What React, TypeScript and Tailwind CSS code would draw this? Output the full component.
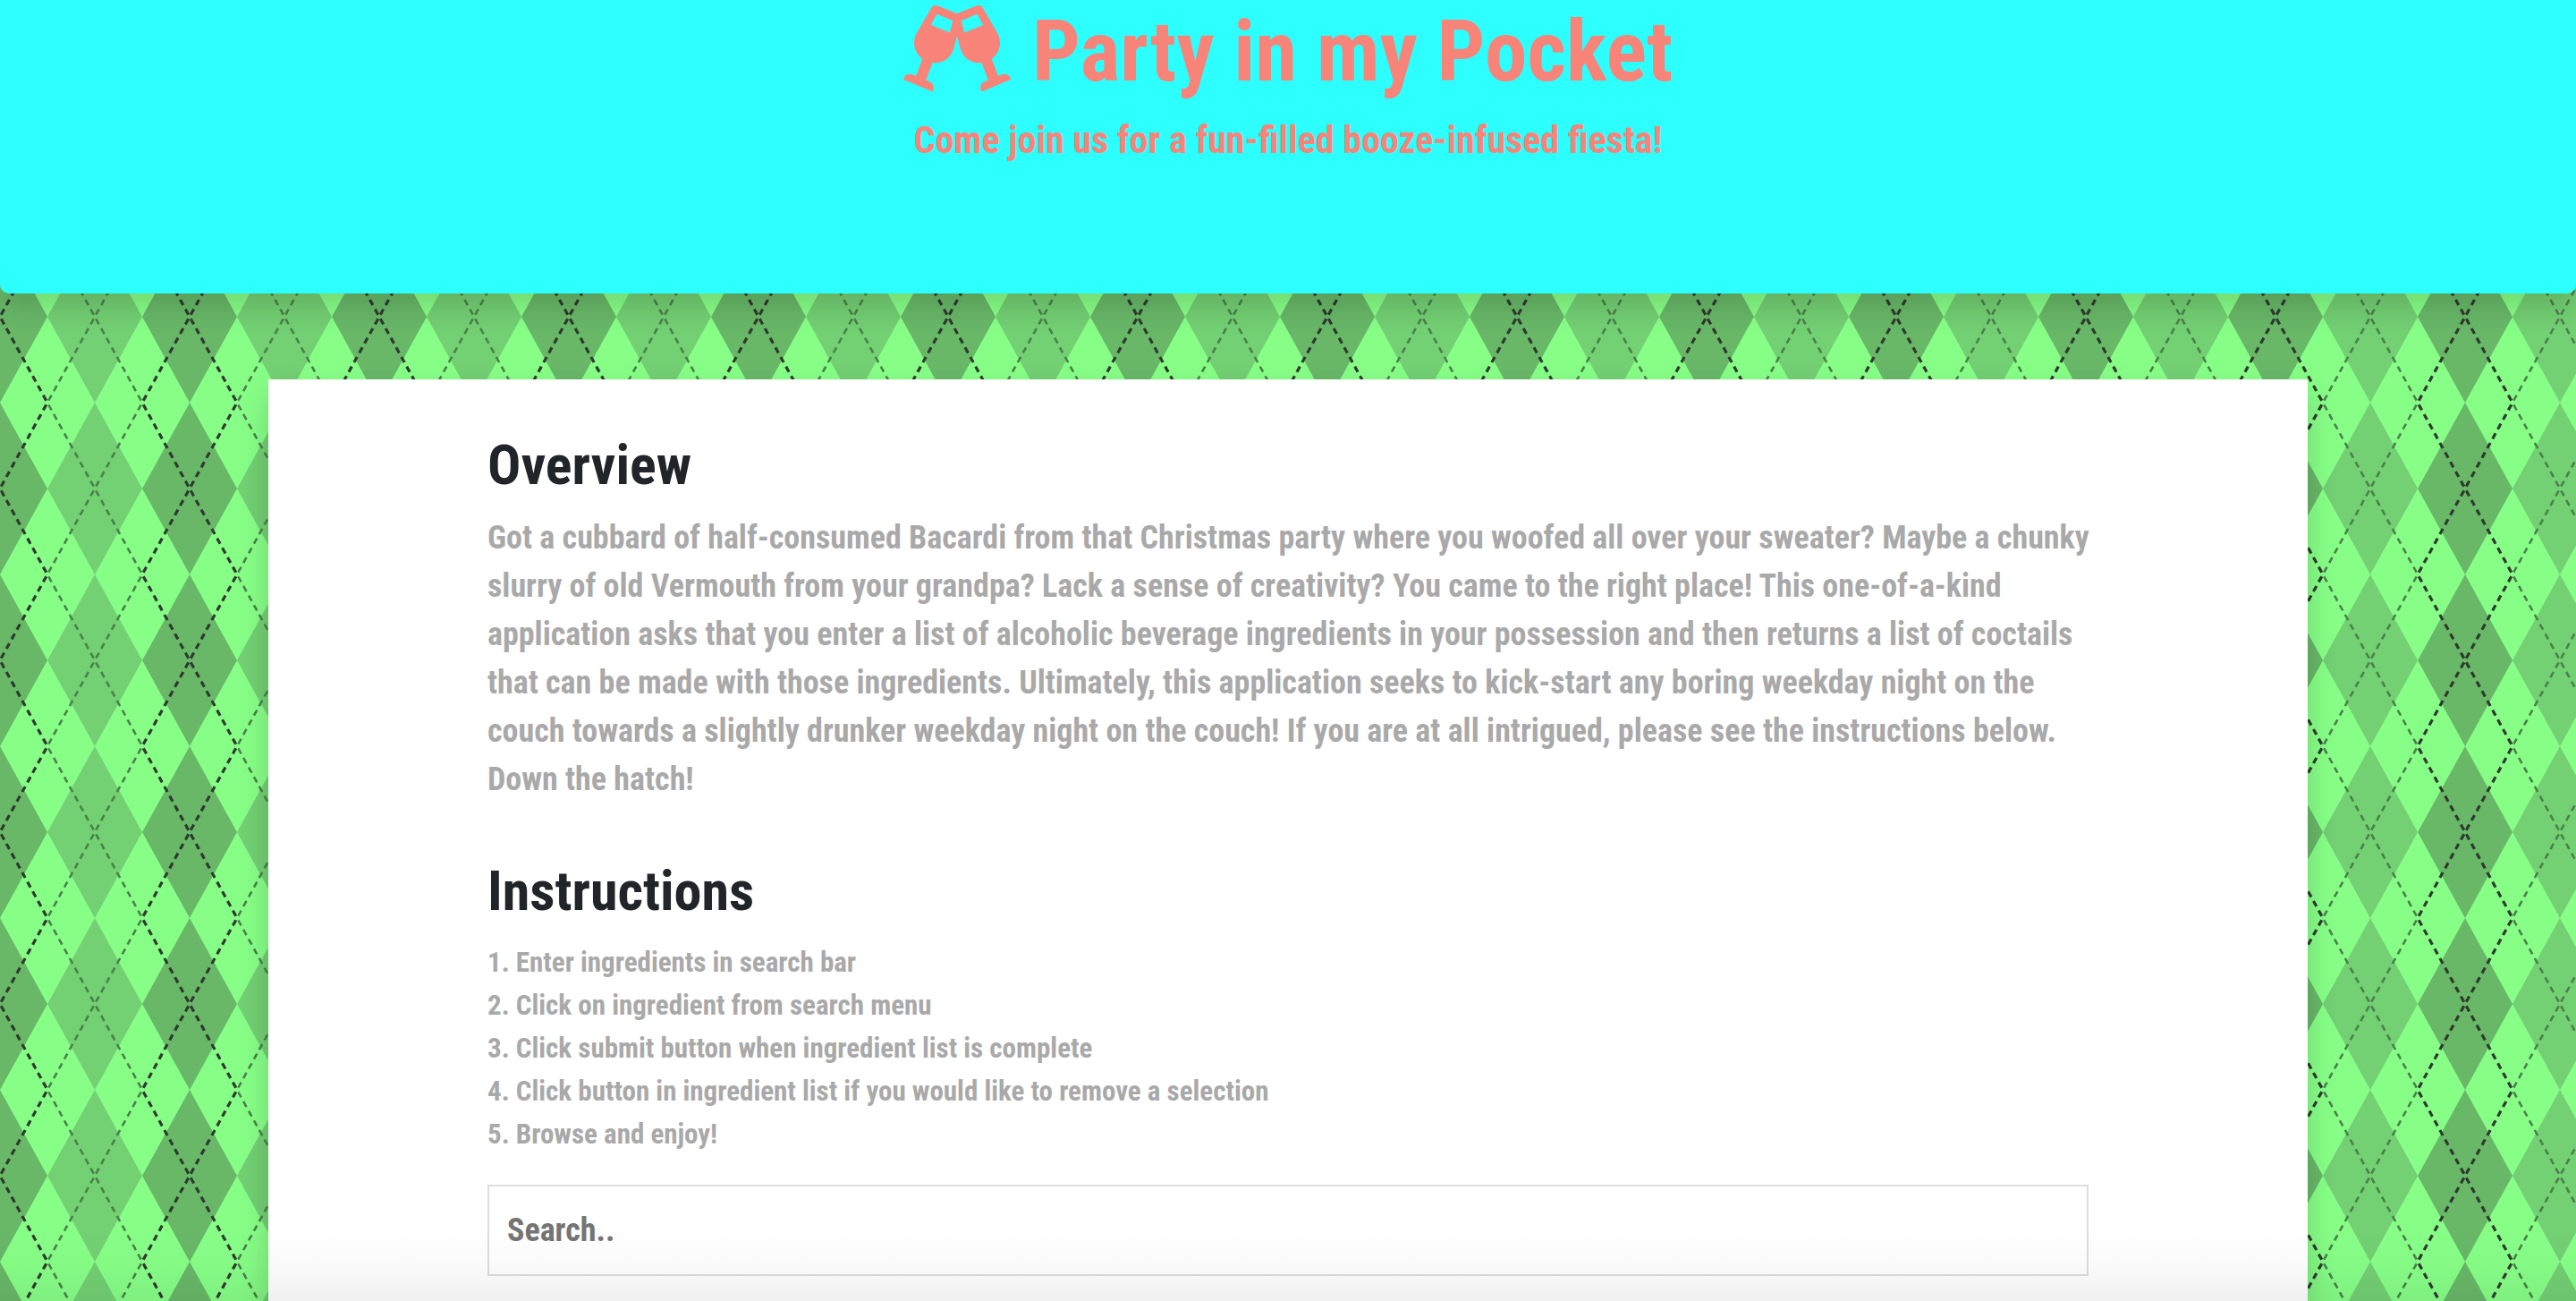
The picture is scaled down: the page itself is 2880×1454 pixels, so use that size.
import { FaGlassCheers } from "react-icons/fa";

const steps = [
  "Enter ingredients in search bar",
  "Click on ingredient from search menu",
  "Click submit button when ingredient list is complete",
  "Click button in ingredient list if you would like to remove a selection",
  "Browse and enjoy!",
];

function Argyle() {
  return (
    <svg className="absolute inset-0 -z-10 h-full w-full" aria-hidden="true">
      <defs>
        <pattern id="argyle" y="66" width="212" height="192" patternUnits="userSpaceOnUse">
          <rect width="212" height="192" fill="#87ff87" />
          <path d="M0 0 53 96 0 192ZM212 0 159 96 212 192Z" fill="#68b868" />
          <path d="M106 0 159 96 106 192 53 96Z" fill="#73d073" />
          <g fill="none" strokeDasharray="7 5.184" strokeDashoffset="-2.6">
            <path
              d="M106 96 53 0M106 96 53 192M106 96 159 0M106 96 159 192"
              stroke="#4a814a"
              strokeWidth="2.6"
            />
            <path
              d="M0 96 53 0M0 96 53 192M212 96 159 0M212 96 159 192"
              stroke="#2f3a2f"
              strokeWidth="3.2"
            />
          </g>
        </pattern>
      </defs>
      <rect width="100%" height="100%" fill="url(#argyle)" />
    </svg>
  );
}

export default function App() {
  return (
    <div className="relative isolate flex h-screen flex-col overflow-hidden font-['Roboto_Condensed','Liberation_Sans',sans-serif] font-bold">
      <Argyle />

      <header className="shrink-0 rounded-b-[10px] bg-[#2dffff] pb-[146px] text-[#f88379] shadow-[0_16px_32px_rgba(0,0,0,0.15)]">
        <h1 className="flex items-start justify-center gap-6 text-[95px] leading-[116px]">
          <FaGlassCheers className="mt-1.5 h-24 w-30" aria-hidden="true" />
          Party in my Pocket
        </h1>
        <p className="mt-4 text-center text-[42px] leading-[50px]">
          Come join us for a fun-filled booze-infused fiesta!
        </p>
      </header>

      <main className="mx-auto mt-24 w-full max-w-[2280px] grow bg-white pt-[58px] shadow-[0_16px_32px_rgba(0,0,0,0.175)]">
        <div className="mx-auto max-w-[1790px] text-[#a9a9a9]">
          <section>
            <h2 className="text-[62px] leading-[76px] text-[#212529]">Overview</h2>
            <p className="mt-4 -mr-2 text-4xl leading-[54px]">
              Got a cubbard of half-consumed Bacardi from that Christmas party where you woofed all
              over your sweater? Maybe a chunky slurry of old Vermouth from your grandpa? Lack a
              sense of creativity? You came to the right place! This one-of-a-kind application asks
              that you enter a list of alcoholic beverage ingredients in your possession and then
              returns a list of coctails that can be made with those ingredients. Ultimately, this
              application seeks to kick-start any boring weekday night on the couch towards a
              slightly drunker weekday night on the couch! If you are at all intrigued, please see
              the instructions below. Down the hatch!
            </p>
          </section>

          <section className="mt-15">
            <h2 className="text-[62px] leading-[76px] text-[#212529]">Instructions</h2>
            <ol className="mt-[18px] text-[31px] leading-[48px]">
              {steps.map((step, i) => (
                <li key={step}>
                  {i + 1}. {step}
                </li>
              ))}
            </ol>
          </section>

          <input
            type="text"
            aria-label="Search ingredients"
            placeholder="Search.."
            className="mt-8 h-[102px] w-full border-2 border-[#dddddd] bg-white px-5 text-4xl text-[#212529] placeholder:text-[#757575]"
          />
        </div>
      </main>

      <div className="pointer-events-none absolute inset-x-0 bottom-0 h-20 bg-linear-to-t from-black/6 via-black/2 to-transparent" />
    </div>
  );
}
